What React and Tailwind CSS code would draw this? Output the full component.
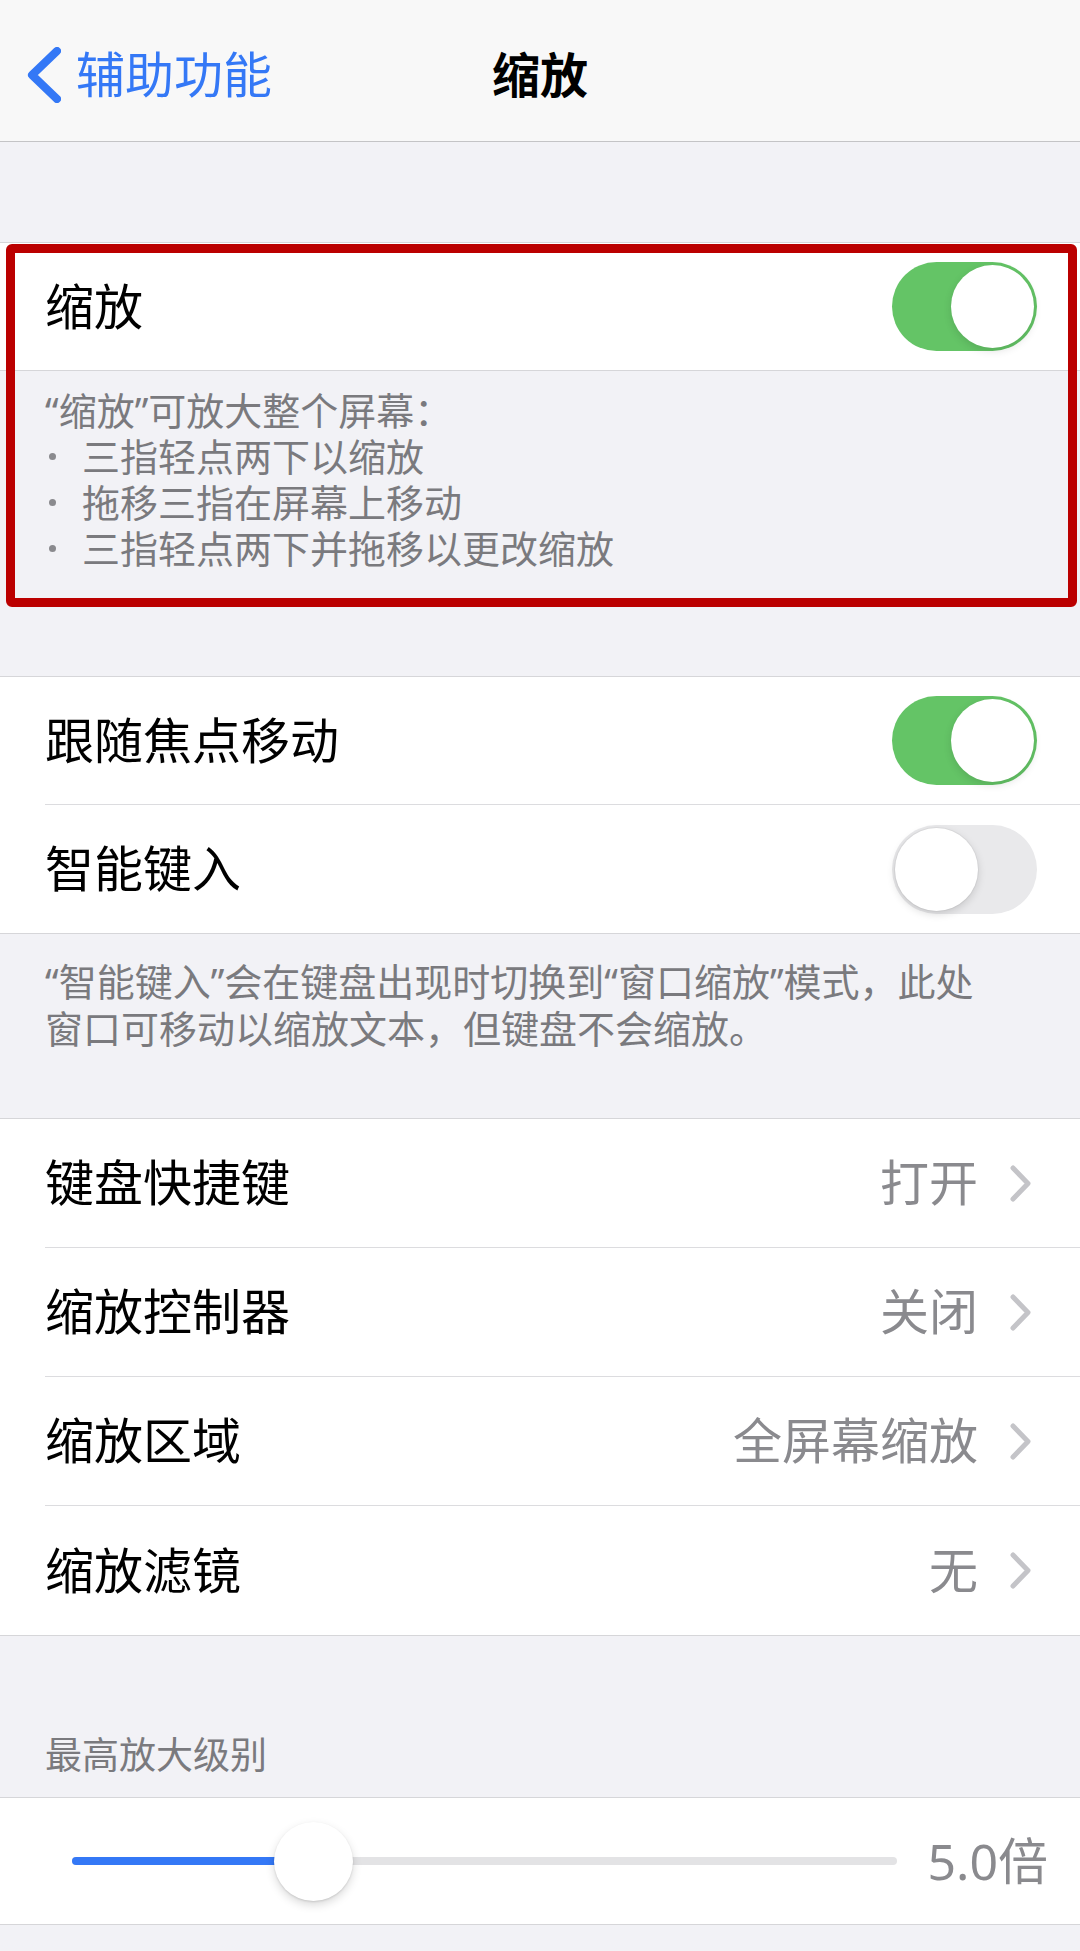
import React from "react";

function Toggle({ on }) {
  if (on) {
    return (
      <div className="w-[145px] h-[89px] rounded-full bg-[#64c466] flex items-center justify-end pr-[3px] shrink-0">
        <div className="w-[83px] h-[83px] rounded-full bg-white shadow-[0_3px_8px_rgba(0,0,0,0.12)]" />
      </div>
    );
  }
  return (
    <div className="w-[145px] h-[89px] rounded-full bg-[#e9e9eb] flex items-center justify-start pl-[3px] shrink-0">
      <div className="w-[83px] h-[83px] rounded-full bg-white shadow-[0_3px_8px_rgba(0,0,0,0.15),0_0_0_1px_rgba(0,0,0,0.04)]" />
    </div>
  );
}

function Chevron() {
  return (
    <svg width="22" height="37" viewBox="0 0 22 37" className="shrink-0">
      <polyline
        points="3,3 18,18.5 3,34"
        fill="none"
        stroke="#c4c4c8"
        strokeWidth="5"
        strokeLinecap="round"
        strokeLinejoin="round"
      />
    </svg>
  );
}

function NavRow({ label, value, last }) {
  return (
    <div className="pl-[45px] bg-white">
      <div
        className={
          "h-[129px] flex items-center pr-[48px] " +
          (last ? "" : "border-b border-[#dcdcdf]")
        }
      >
        <span className="text-[49px] text-black flex-1">{label}</span>
        <span className="text-[49px] text-[#8a8a8e] mr-[32px]">{value}</span>
        <Chevron />
      </div>
    </div>
  );
}

function Bullet({ children }) {
  return (
    <div className="flex items-center h-[46px]">
      <span className="ml-[4px] mr-[26px] w-[7px] h-[7px] rounded-full bg-[#8a8a8e] shrink-0" />
      <span className="leading-[46px]">{children}</span>
    </div>
  );
}

export default function App() {
  return (
    <div
      className="w-[1080px] h-[1951px] bg-[#f2f2f6] overflow-hidden flex flex-col"
      style={{ fontFamily: '"Noto Sans", "Noto Sans CJK SC", sans-serif' }}
    >
      {/* Nav bar */}
      <div className="h-[142px] shrink-0 bg-[#f8f8f8] border-b border-[#c4c4c6] relative flex items-center pt-[8px]">
        <div className="flex items-center pl-[27px]">
          <svg width="34" height="56" viewBox="0 0 34 56">
            <polyline
              points="30,4 5,28 30,52"
              fill="none"
              stroke="#3478f6"
              strokeWidth="8"
              strokeLinecap="round"
              strokeLinejoin="round"
            />
          </svg>
          <span className="ml-[15px] text-[49px] text-[#3478f6] leading-none">辅助功能</span>
        </div>
        <div className="absolute left-0 right-0 top-[8px] bottom-0 flex items-center justify-center pointer-events-none">
          <span className="text-[48px] font-bold text-black leading-none">缩放</span>
        </div>
      </div>

      {/* Gap */}
      <div className="h-[100px] shrink-0" />

      {/* Section 1 with annotation box */}
      <div className="relative shrink-0">
        <div className="bg-white border-t border-b border-[#d6d6d9] pl-[45px] pr-[43px] h-[129px] flex items-center">
          <span className="text-[49px] text-black flex-1">缩放</span>
          <Toggle on />
        </div>
        <div className="pl-[45px] pt-[16px] pb-[105px] text-[38px] leading-[46px] text-[#7a7a7e]">
          <div className="h-[46px]">“缩放”可放大整个屏幕：</div>
          <Bullet>三指轻点两下以缩放</Bullet>
          <Bullet>拖移三指在屏幕上移动</Bullet>
          <Bullet>三指轻点两下并拖移以更改缩放</Bullet>
        </div>
        <div className="absolute left-[6px] right-[3px] top-[2px] h-[363px] border-[9px] border-[#bb0000] rounded-[6px] pointer-events-none" />
      </div>

      {/* Section 2 */}
      <div className="bg-white border-t border-b border-[#d6d6d9] shrink-0">
        <div className="pl-[45px]">
          <div className="h-[128px] flex items-center pr-[43px] border-b border-[#dcdcdf]">
            <span className="text-[49px] text-black flex-1">跟随焦点移动</span>
            <Toggle on />
          </div>
        </div>
        <div className="pl-[45px] pr-[43px] h-[128px] flex items-center">
          <span className="text-[49px] text-black flex-1">智能键入</span>
          <Toggle on={false} />
        </div>
      </div>
      <div className="pl-[45px] pr-[40px] pt-[24px] pb-[66px] text-[38px] leading-[47px] text-[#7a7a7e] shrink-0">
        <div>“智能键入”会在键盘出现时切换到“窗口缩放”模式，此处</div>
        <div>窗口可移动以缩放文本，但键盘不会缩放。</div>
      </div>

      {/* Section 3 */}
      <div className="bg-white border-t border-b border-[#d6d6d9] shrink-0">
        <NavRow label="键盘快捷键" value="打开" />
        <NavRow label="缩放控制器" value="关闭" />
        <NavRow label="缩放区域" value="全屏幕缩放" />
        <NavRow label="缩放滤镜" value="无" last />
      </div>

      {/* Header */}
      <div className="pl-[45px] pt-[97px] pb-[20px] text-[37px] leading-[44px] text-[#7a7a7e] shrink-0">
        最高放大级别
      </div>

      {/* Slider */}
      <div className="bg-white border-t border-b border-[#d6d6d9] h-[128px] flex items-center pl-[72px] pr-[32px] shrink-0">
        <div className="relative flex-1 h-[8px] rounded-full bg-[#e3e3e5]">
          <div className="absolute left-0 top-0 h-[8px] w-[241px] rounded-full bg-[#3478f6]" />
          <div className="absolute left-[202px] top-[-35px] w-[79px] h-[79px] rounded-full bg-white shadow-[0_4px_10px_rgba(0,0,0,0.15),0_1px_2px_rgba(0,0,0,0.12)]" />
        </div>
        <span className="ml-[30px] text-[50px] text-[#8a8a8e] leading-none">5.0倍</span>
      </div>
    </div>
  );
}
